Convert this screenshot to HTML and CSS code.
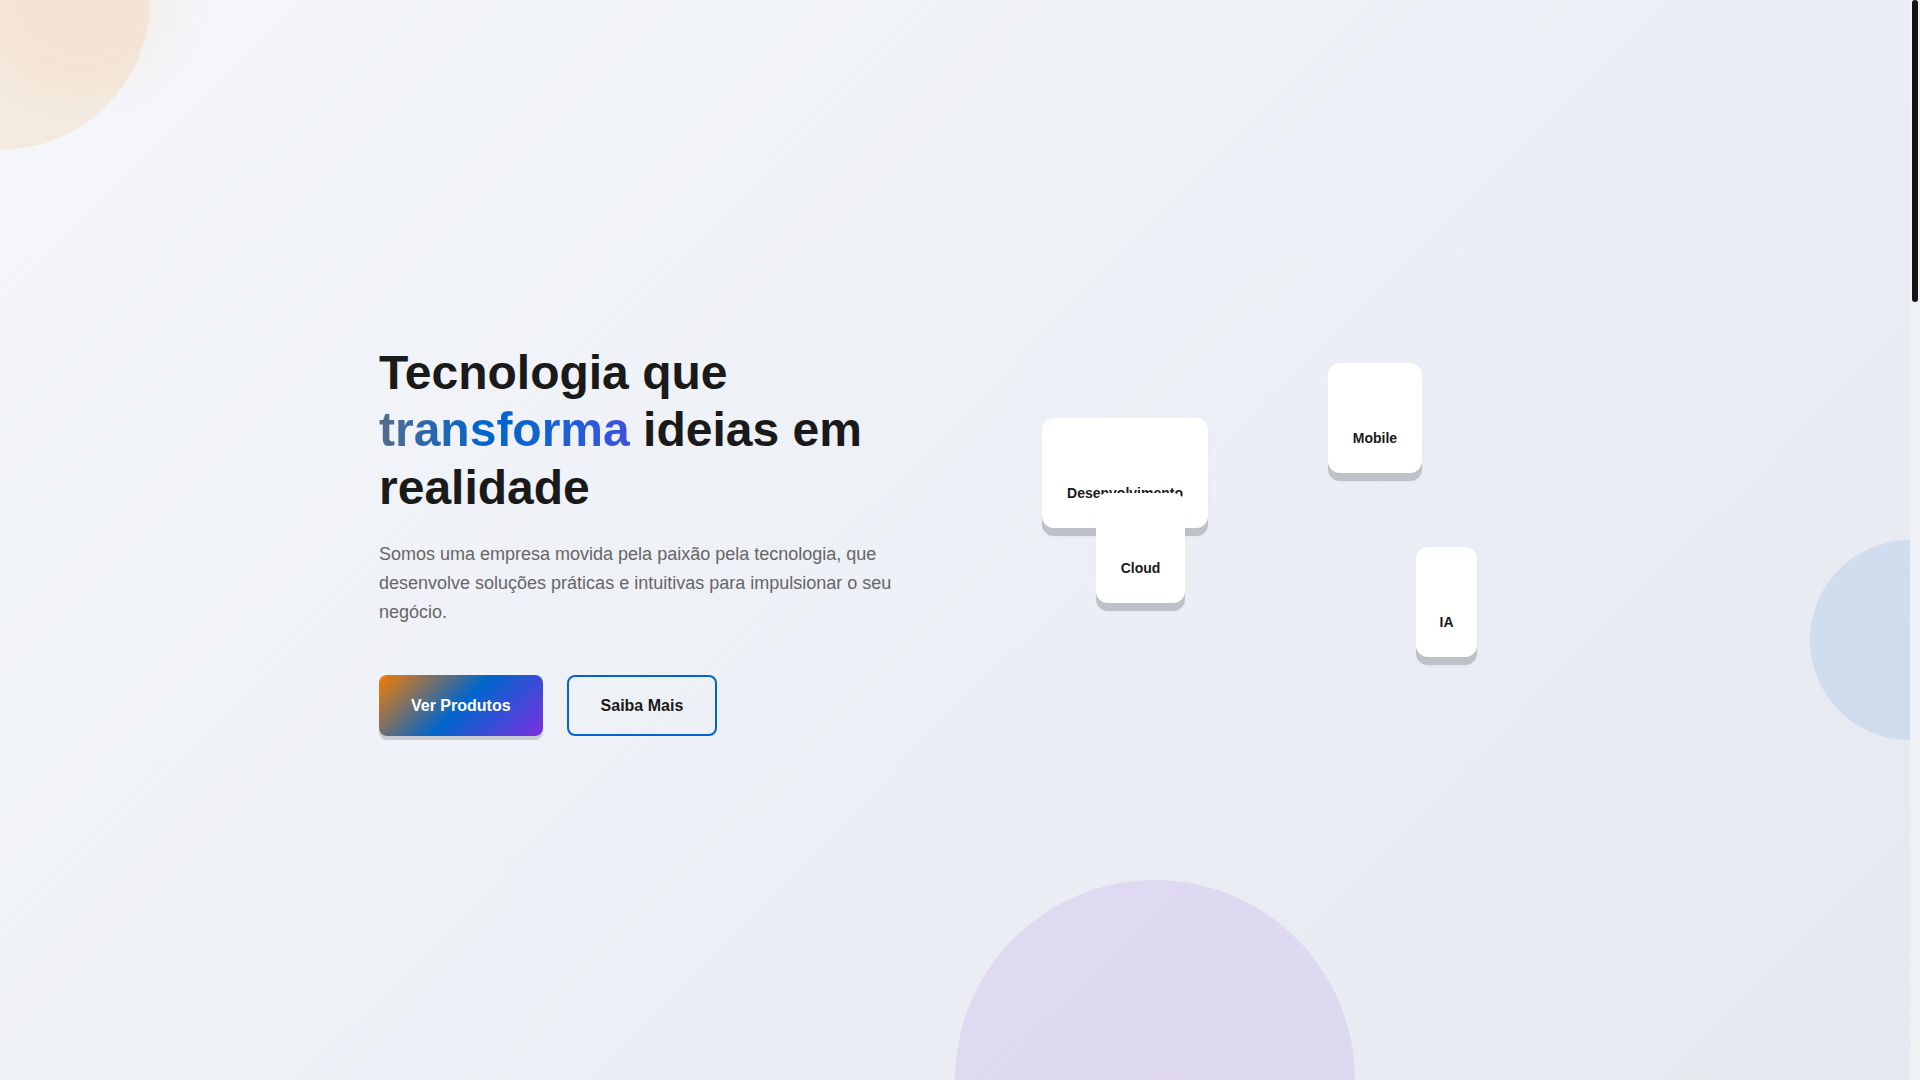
FILE: index.html
```html
<!DOCTYPE html>
<html lang="pt-BR">
<head>
<meta charset="utf-8">
<title>Tecnologia que transforma ideias em realidade</title>
<link rel="stylesheet" href="styles.css">
</head>
<body>
<section class="hero">
  <span class="blob blob-peach"></span>
  <span class="blob blob-peach-halo"></span>
  <span class="blob blob-blue"></span>
  <span class="blob blob-purple"></span>
  <div class="container">
    <div class="hero-text">
      <h1 class="title">Tecnologia que <span class="grad">transforma</span> ideias em realidade</h1>
      <p class="lead">Somos uma empresa movida pela paixão pela tecnologia, que desenvolve soluções práticas e intuitivas para impulsionar o seu negócio.</p>
      <div class="actions">
        <a class="btn btn-primary" href="#produtos">Ver Produtos</a>
        <a class="btn btn-outline" href="#sobre">Saiba Mais</a>
      </div>
    </div>
    <div class="hero-visual">
      <div class="card card-dev"><span class="card-icon"></span><span class="card-label">Desenvolvimento</span></div>
      <div class="card card-mobile"><span class="card-icon"></span><span class="card-label">Mobile</span></div>
      <div class="card card-cloud"><span class="card-icon"></span><span class="card-label">Cloud</span></div>
      <div class="card card-ia"><span class="card-icon"></span><span class="card-label">IA</span></div>
    </div>
  </div>
</section>
<section class="below" id="produtos"></section>
<div class="scrollbar" aria-hidden="true"><span class="scrollbar-thumb"></span></div>
</body>
</html>
```

FILE: styles.css
```css
* { box-sizing: border-box; }

html, body {
  margin: 0;
  padding: 0;
}

body {
  font-family: "Liberation Sans", Arial, sans-serif;
  color: #1a1a1a;
  background: linear-gradient(135deg, #f5f7fa 0%, #e4e8f0 100%);
  background-attachment: fixed;
  overflow-x: hidden;
}

::-webkit-scrollbar { width: 0; height: 0; }

.scrollbar {
  position: fixed;
  top: 0;
  right: 0;
  bottom: 0;
  width: 10px;
  background: #f0f1f4;
  z-index: 10;
}

.scrollbar-thumb {
  display: block;
  margin: 0 2px;
  height: 302px;
  border-radius: 3px;
  background: #141414;
}

.hero {
  position: relative;
  min-height: 100vh;
  display: flex;
  align-items: center;
  padding-right: 10px;
  overflow: hidden;
}

.blob {
  position: absolute;
  border-radius: 50%;
  pointer-events: none;
}

.blob-peach {
  width: 300px;
  height: 300px;
  left: -150px;
  top: -150px;
  background: rgba(245, 124, 0, 0.1);
}

.blob-peach-halo {
  width: 200px;
  height: 200px;
  left: -20px;
  top: -110px;
  background: rgba(245, 124, 0, 0.05);
  filter: blur(18px);
}

.blob-blue {
  width: 200px;
  height: 200px;
  right: -90px;
  top: 540px;
  background: rgba(0, 102, 204, 0.1);
}

.blob-purple {
  width: 400px;
  height: 400px;
  left: 955px;
  top: 880px;
  background: rgba(123, 47, 224, 0.1);
}

.container {
  position: relative;
  width: 1152px;
  margin: 0 auto;
  display: grid;
  grid-template-columns: 1fr 1fr;
  gap: 64px;
  align-items: center;
}

.title {
  margin: 0 0 24px;
  font-size: 48px;
  line-height: 1.2;
  font-weight: 700;
  color: #1a1a1a;
}

.grad {
  background: linear-gradient(90deg, #566c88 0%, #2f68ac 18%, #0066cc 42%, #1862d4 70%, #3d50e0 100%);
  -webkit-background-clip: text;
  background-clip: text;
  color: transparent;
}

.lead {
  margin: 0 0 48px;
  font-size: 18px;
  line-height: 1.6;
  color: #666666;
}

.actions {
  display: flex;
  gap: 24px;
}

.btn {
  display: inline-block;
  font-size: 16px;
  line-height: 1.6;
  font-weight: 700;
  text-decoration: none;
  border-radius: 8px;
}

.btn-primary {
  padding: 18px 32px;
  color: #ffffff;
  background: linear-gradient(135deg, #f57c00 0%, #0066cc 50%, #7b2fe0 100%);
  box-shadow: 0 4px 0 #c9ccd3;
}

.btn-outline {
  padding: 16px 32px;
  color: #1a1a1a;
  border: 2px solid #0066cc;
  background: transparent;
}

.hero-visual {
  position: relative;
  height: 400px;
}

.card {
  position: absolute;
  display: flex;
  flex-direction: column;
  align-items: center;
  padding: 24px 25px;
  background: #ffffff;
  border-radius: 12px;
  box-shadow: 0 8px 0 #bec2c8, 0 9px 3px rgba(0, 0, 0, 0.04);
}

.card-icon {
  display: block;
  height: 40px;
}

.card-label {
  font-size: 14px;
  line-height: 1.6;
  font-weight: 700;
  color: #1a1a1a;
  white-space: nowrap;
}

.card-dev { left: 55px; top: 78px; width: 166px; }
.card-mobile { left: 341px; top: 23px; width: 94px; }
.card-cloud { left: 109px; top: 153px; width: 89px; }
.card-ia { left: 429px; top: 207px; width: 61px; }

.below {
  height: 2780px;
}
```
